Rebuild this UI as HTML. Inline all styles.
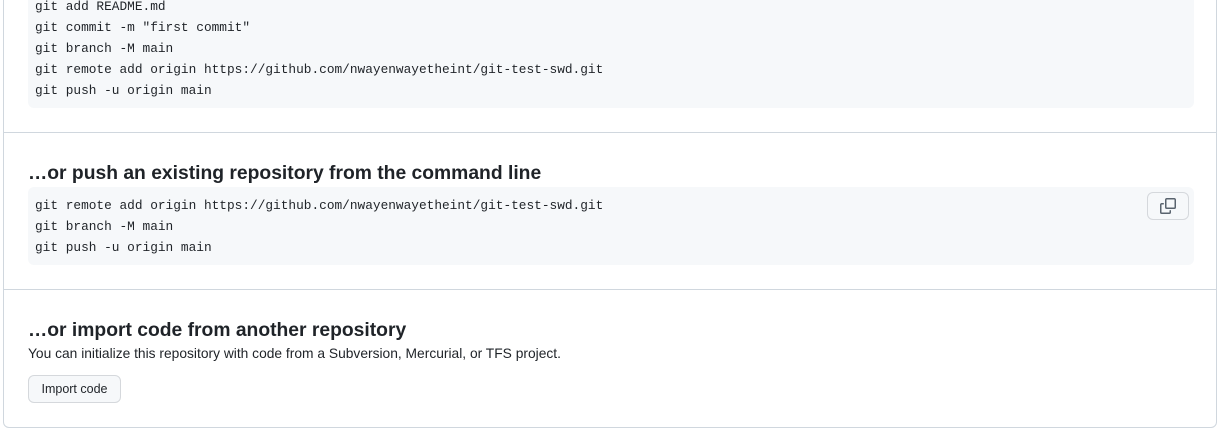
<!DOCTYPE html>
<html><head><style>
body{margin:0;width:1220px;height:431px;overflow:hidden;background:#fff;font-family:"Liberation Sans",sans-serif;color:#1f2328;position:relative}
.box{position:absolute;left:3px;top:-10px;width:1212px;height:436px;border:1px solid #d0d7de;border-radius:0 0 6px 6px}
.hr{position:absolute;left:4px;width:1212px;height:1px;background:#d0d7de}
.code{position:absolute;left:28px;width:1166px;background:#f6f8fa;border-radius:6px}
pre{margin:0;font-family:"Liberation Mono",monospace;font-size:12.8px;line-height:21px;color:#1f2328;position:absolute;left:35px}
h3{position:absolute;left:28px;margin:0;font-size:19.3px;font-weight:600;line-height:24px}
p{position:absolute;left:28px;margin:0;font-size:13.8px;top:346px}
.btn{position:absolute;left:28px;top:375px;width:93px;height:28px;border:1px solid #d5d8dc;border-radius:6px;background:#f6f8fa;font-size:12.5px;font-weight:500;line-height:26px;text-align:center;box-sizing:border-box}
.copy{position:absolute;left:1147px;top:192px;width:42px;height:28px;border:1px solid #d5d8dc;border-radius:6px;box-sizing:border-box;background:#f6f8fa}
</style></head><body>
<div class="box"></div>
<div class="code" style="top:-20px;height:128px"></div>
<pre style="top:-4.5px">git add README.md
git commit -m "first commit"
git branch -M main
git remote add origin https://github.com/nwayenwayetheint/git-test-swd.git
git push -u origin main</pre>
<div class="hr" style="top:132px"></div>
<h3 style="top:162px">…or push an existing repository from the command line</h3>
<div class="code" style="top:187px;height:78px"></div>
<pre style="top:195px">git remote add origin https://github.com/nwayenwayetheint/git-test-swd.git
git branch -M main
git push -u origin main</pre>
<div class="copy"><svg width="16" height="16" viewBox="0 0 16 16" style="position:absolute;left:12px;top:5px" fill="#59636e"><path d="M0 6.75C0 5.78.78 5 1.75 5h1.5a.75.75 0 0 1 0 1.5h-1.5a.25.25 0 0 0-.25.25v7.5c0 .14.11.25.25.25h7.5a.25.25 0 0 0 .25-.25v-1.5a.75.75 0 0 1 1.5 0v1.5A1.75 1.75 0 0 1 9.25 16h-7.5A1.75 1.75 0 0 1 0 14.25Z"/><path d="M5 1.75C5 .78 5.78 0 6.75 0h7.5C15.22 0 16 .78 16 1.75v7.5A1.75 1.75 0 0 1 14.25 11h-7.5A1.75 1.75 0 0 1 5 9.25Zm1.75-.25a.25.25 0 0 0-.25.25v7.5c0 .14.11.25.25.25h7.5a.25.25 0 0 0 .25-.25v-7.5a.25.25 0 0 0-.25-.25Z"/></svg></div>
<div class="hr" style="top:289px"></div>
<h3 style="top:319px">…or import code from another repository</h3>
<p>You can initialize this repository with code from a Subversion, Mercurial, or TFS project.</p>
<div class="btn">Import code</div>
</body></html>
